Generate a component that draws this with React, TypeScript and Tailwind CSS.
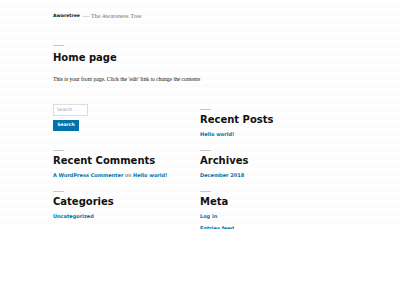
const sans = "font-['DejaVu_Sans',sans-serif]";
const serif = "font-['Liberation_Serif',serif]";

const Rule = () => <div className="h-px w-[11px] bg-[#c8c8c8]" />;

const Widget = ({ title, children, className = '' }: { title: string; children: React.ReactNode; className?: string }) => (
  <section className={className}>
    <Rule />
    <h2 className={`${sans} mt-[4px] h-[12px] text-[10px] font-bold leading-[12px] text-[#111]`}>{title}</h2>
    <ul className={`${sans} mt-[3px] text-[5px] font-bold leading-[10px] text-[#0073aa]`}>{children}</ul>
  </section>
);

export default function App() {
  return (
    <div className="h-[300px] w-[400px] bg-white">
      <div className="h-[229px] overflow-hidden bg-[repeating-linear-gradient(180deg,#ffffff_0px,#ffffff_4px,#fcfcfc_4px,#fcfcfc_8px)] pl-[53px]">
        {/* header */}
        <header className="mt-[12px] flex h-[8px] items-center gap-[3px] leading-[8px]">
          <span className={`${sans} text-[4.6px] font-semibold text-[#111]`}>Awaretree</span>
          <span className={`${serif} text-[6.3px] text-[#767676]`}>— The Awareness Tree</span>
        </header>

        {/* entry */}
        <article className="mt-[25px]">
          <Rule />
          <h1 className={`${sans} mt-[6px] h-[12px] text-[10px] font-bold leading-[12px] text-[#111]`}>Home page</h1>
          <p className={`${serif} mt-[11px] h-[8px] text-[5.6px] leading-[8px] text-[#111]`}>
            This is your front page. Click the 'edit' link to change the contents
          </p>
        </article>

        {/* widgets */}
        <div className="mt-[21px] grid w-[294px] grid-cols-2 gap-y-[11px]">
          <section>
            <div className={`${sans} flex h-[12px] w-[35px] items-center border border-[#ddd] bg-white px-[3px] text-[4.5px] text-[#999]`}>
              Search …
            </div>
            <button className={`${sans} mt-[4px] flex h-[11px] w-[26px] items-center justify-center bg-[#0073aa] text-[4.5px] font-bold text-white`}>
              Search
            </button>
          </section>
          <Widget title="Recent Posts" className="mt-[5px]">
            <li>Hello world!</li>
          </Widget>
          <Widget title="Recent Comments">
            <li>
              A WordPress Commenter <span className="font-normal text-[#333]">on</span> Hello world!
            </li>
          </Widget>
          <Widget title="Archives">
            <li>December 2018</li>
          </Widget>
          <Widget title="Categories">
            <li>Uncategorized</li>
          </Widget>
          <Widget title="Meta">
            <li>Log in</li>
            <li className="mt-[2px]">Entries feed</li>
          </Widget>
        </div>
      </div>
    </div>
  );
}
